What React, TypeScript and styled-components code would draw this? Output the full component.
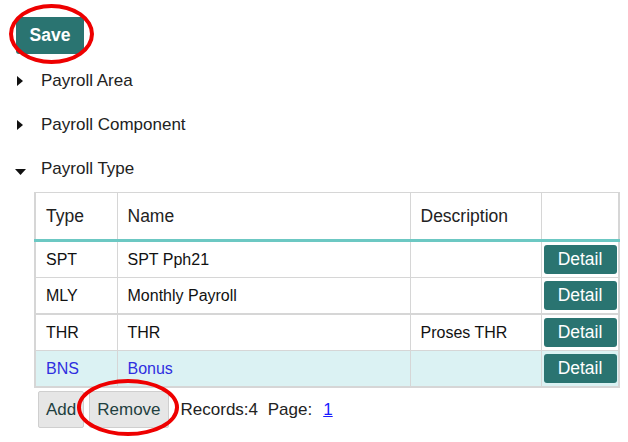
import styled, { createGlobalStyle } from "styled-components";

const GlobalStyle = createGlobalStyle`
  body {
    margin: 0;
    background: #ffffff;
    font-family: "Liberation Sans", Arial, sans-serif;
    color: #222222;
  }
`;

const Page = styled.div`
  position: relative;
  width: 628px;
  height: 442px;
  overflow: hidden;
  padding: 17px 0 0 16px;
  box-sizing: border-box;
`;

const SaveButton = styled.button`
  display: block;
  width: 68px;
  height: 37px;
  border: none;
  border-radius: 3px;
  background: #2a7471;
  color: #ffffff;
  font-family: inherit;
  font-size: 17.5px;
  font-weight: bold;
  padding: 0;
`;

const Tree = styled.ul`
  list-style: none;
  margin: 5px 0 0 0;
  padding: 0;
`;

const TreeItem = styled.li`
  display: flex;
  align-items: center;
  height: 44px;
  font-size: 17px;
  color: #222222;
`;

const Caret = styled.span`
  width: 24px;
  display: inline-flex;
  justify-content: flex-start;
  padding-left: 1px;
  svg {
    display: block;
  }
`;

const TableWrap = styled.div`
  margin: 1px 0 0 18px;
  width: 584px;
`;

const Grid = styled.table`
  width: 584px;
  border-collapse: collapse;
  font-size: 16px;
  table-layout: fixed;
  border-left: 2px solid #d6d6d6;
  border-right: 2px solid #d6d6d6;
  border-bottom: 2px solid #d6d6d6;
`;

const HeadCell = styled.th`
  text-align: left;
  font-weight: normal;
  font-size: 17.5px;
  height: 46px;
  padding: 0 10px;
  border: 1px solid #d6d6d6;
  border-bottom: 3px solid #6cc8c3;
  color: #222222;
`;

const Row = styled.tr<{ $selected?: boolean; $split?: boolean }>`
  background: ${(p) => (p.$selected ? "#dbf2f3" : "#ffffff")};
  color: ${(p) => (p.$selected ? "#2f2fe0" : "#111111")};
  border-top: ${(p) => (p.$split ? "2px solid #d6d6d6" : "1px solid #d6d6d6")};
`;

const Cell = styled.td`
  height: 35px;
  padding: 0 10px;
  border: 1px solid #d6d6d6;
  vertical-align: middle;
`;

const ActionCell = styled.td`
  height: 35px;
  padding: 0 0 0 2px;
  border: 1px solid #d6d6d6;
  vertical-align: middle;
`;

const DetailButton = styled.button`
  display: block;
  width: 73px;
  height: 29px;
  border: none;
  border-radius: 3px;
  background: #2a7471;
  color: #ffffff;
  font-family: inherit;
  font-size: 17.5px;
  padding: 0;
`;

const Footer = styled.div`
  display: flex;
  align-items: center;
  margin: 3px 0 0 4px;
  font-size: 17px;
  color: #222222;
`;

const GreyButton = styled.button`
  height: 37px;
  padding: 0 7px;
  margin-right: 5px;
  background: #e6e6e6;
  border: 1px solid #cfcfcf;
  border-radius: 2px;
  font-family: inherit;
  font-size: 17px;
  color: #1f3f3f;
`;

const Meta = styled.span`
  margin-left: 7px;
  word-spacing: 5px;
`;

const PageLink = styled.a`
  color: #1a1aff;
  text-decoration: underline;
  margin-left: 11px;
`;

const Ring = styled.div<{ $x: number; $y: number; $w: number; $h: number }>`
  position: absolute;
  left: ${(p) => p.$x}px;
  top: ${(p) => p.$y}px;
  width: ${(p) => p.$w}px;
  height: ${(p) => p.$h}px;
  border: 4px solid #ee0000;
  border-radius: 50%;
  box-sizing: border-box;
  pointer-events: none;
`;

const rows = [
  { type: "SPT", name: "SPT Pph21", desc: "" },
  { type: "MLY", name: "Monthly Payroll", desc: "" },
  { type: "THR", name: "THR", desc: "Proses THR", split: true },
  { type: "BNS", name: "Bonus", desc: "", selected: true },
];

function RightCaret() {
  return (
    <svg width="6" height="10" viewBox="0 0 6 10">
      <path d="M0 0 L6 5 L0 10 Z" fill="#111" />
    </svg>
  );
}

function DownCaret() {
  return (
    <svg width="11" height="6" viewBox="0 0 11 6" style={{ marginTop: 6, marginLeft: -2 }}>
      <path d="M0 0 L11 0 L5.5 6 Z" fill="#111" />
    </svg>
  );
}

export default function App() {
  return (
    <>
      <GlobalStyle />
      <Page>
        <SaveButton>Save</SaveButton>
        <Tree>
          <TreeItem>
            <Caret>
              <RightCaret />
            </Caret>
            Payroll Area
          </TreeItem>
          <TreeItem>
            <Caret>
              <RightCaret />
            </Caret>
            Payroll Component
          </TreeItem>
          <TreeItem>
            <Caret>
              <DownCaret />
            </Caret>
            Payroll Type
          </TreeItem>
        </Tree>
        <TableWrap>
          <Grid>
            <colgroup>
              <col style={{ width: 82 }} />
              <col style={{ width: 293 }} />
              <col style={{ width: 131 }} />
              <col style={{ width: 78 }} />
            </colgroup>
            <thead>
              <tr>
                <HeadCell>Type</HeadCell>
                <HeadCell>Name</HeadCell>
                <HeadCell>Description</HeadCell>
                <HeadCell></HeadCell>
              </tr>
            </thead>
            <tbody>
              {rows.map((r) => (
                <Row key={r.type} $selected={r.selected} $split={r.split}>
                  <Cell>{r.type}</Cell>
                  <Cell>{r.name}</Cell>
                  <Cell>{r.desc}</Cell>
                  <ActionCell>
                    <DetailButton>Detail</DetailButton>
                  </ActionCell>
                </Row>
              ))}
            </tbody>
          </Grid>
          <Footer>
            <GreyButton>Add</GreyButton>
            <GreyButton>Remove</GreyButton>
            <Meta>Records:4 Page:</Meta>
            <PageLink href="#">1</PageLink>
          </Footer>
        </TableWrap>
        <Ring $x={9} $y={4} $w={85} $h={60} />
        <Ring $x={77} $y={379} $w={102} $h={57} />
      </Page>
    </>
  );
}
